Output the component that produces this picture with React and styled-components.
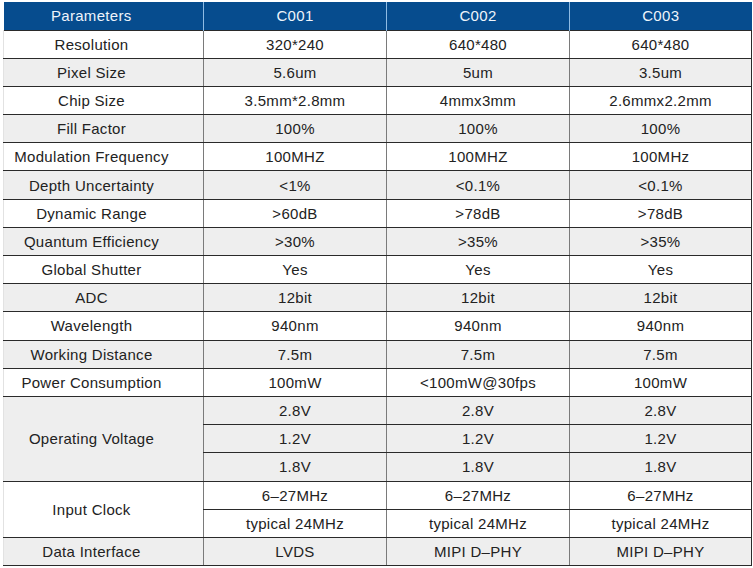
import React from "react";
import styled, { createGlobalStyle } from "styled-components";

const GlobalStyle = createGlobalStyle`
  html, body {
    margin: 0;
    padding: 0;
    background: #ffffff;
  }
  body {
    font-family: "Liberation Sans", Arial, sans-serif;
  }
`;

const models = ["C001", "C002", "C003"];

// each spec: label, then one array of values per sub-row
const specs = [
  { label: "Resolution", rows: [["320*240", "640*480", "640*480"]] },
  { label: "Pixel Size", rows: [["5.6um", "5um", "3.5um"]] },
  { label: "Chip Size", rows: [["3.5mm*2.8mm", "4mmx3mm", "2.6mmx2.2mm"]] },
  { label: "Fill Factor", rows: [["100%", "100%", "100%"]] },
  { label: "Modulation Frequency", rows: [["100MHZ", "100MHZ", "100MHz"]] },
  { label: "Depth Uncertainty", rows: [["<1%", "<0.1%", "<0.1%"]] },
  { label: "Dynamic Range", rows: [[">60dB", ">78dB", ">78dB"]] },
  { label: "Quantum Efficiency", rows: [[">30%", ">35%", ">35%"]] },
  { label: "Global Shutter", rows: [["Yes", "Yes", "Yes"]] },
  { label: "ADC", rows: [["12bit", "12bit", "12bit"]] },
  { label: "Wavelength", rows: [["940nm", "940nm", "940nm"]] },
  { label: "Working Distance", rows: [["7.5m", "7.5m", "7.5m"]] },
  { label: "Power Consumption", rows: [["100mW", "<100mW@30fps", "100mW"]] },
  {
    label: "Operating Voltage",
    rows: [
      ["2.8V", "2.8V", "2.8V"],
      ["1.2V", "1.2V", "1.2V"],
      ["1.8V", "1.8V", "1.8V"],
    ],
  },
  {
    label: "Input Clock",
    rows: [
      ["6–27MHz", "6–27MHz", "6–27MHz"],
      ["typical 24MHz", "typical 24MHz", "typical 24MHz"],
    ],
  },
  { label: "Data Interface", rows: [["LVDS", "MIPI D–PHY", "MIPI D–PHY"]] },
];

const SpecTable = () => {
  return (
    <Wrap>
      <Table>
        <colgroup>
          <col style={{ width: 200 }} />
          <col style={{ width: 183 }} />
          <col style={{ width: 183 }} />
          <col style={{ width: 182 }} />
        </colgroup>
        <thead>
          <HeadRow>
            <HeadCell $label>Parameters</HeadCell>
            {models.map((m) => (
              <HeadCell key={m}>{m}</HeadCell>
            ))}
          </HeadRow>
        </thead>
        <tbody>
          {specs.map((spec, i) =>
            spec.rows.map((values, j) => (
              <BodyRow key={spec.label + j} $shade={i % 2 === 1}>
                {j === 0 && (
                  <LabelCell rowSpan={spec.rows.length}>{spec.label}</LabelCell>
                )}
                {values.map((v, k) => (
                  <Cell key={k}>{v}</Cell>
                ))}
              </BodyRow>
            ))
          )}
        </tbody>
      </Table>
    </Wrap>
  );
};

export default function App() {
  return (
    <>
      <GlobalStyle />
      <SpecTable />
    </>
  );
}

const Wrap = styled.div`
  padding: 2px 0 0 3px;
`;

const Table = styled.table`
  border-collapse: collapse;
  table-layout: fixed;
  width: 748px;
  font-size: 15px;
  letter-spacing: 0.3px;
  color: #222222;
`;

const HeadRow = styled.tr`
  height: 28px;
  background: #064c8e;
`;

const HeadCell = styled.th`
  padding: 0 ${(p) => (p.$label ? "24px" : "0")} 0 0;
  font-weight: normal;
  color: #eef4fb;
  text-align: center;
  vertical-align: middle;
  border-left: 1px solid #8fbbe3;
  &:first-child {
    border-left: none;
  }
`;

const BodyRow = styled.tr`
  height: 28.2px;
  background: ${(p) => (p.$shade ? "#eeeeee" : "#ffffff")};
`;

const Cell = styled.td`
  padding: 0;
  text-align: center;
  vertical-align: middle;
  white-space: nowrap;
  border-top: 1px solid #2a2a2a;
  border-bottom: 1px solid #2a2a2a;
  border-left: 1px solid #7a7a7a;
  &:last-child {
    border-right: 1px solid #2a2a2a;
  }
`;

const LabelCell = styled(Cell)`
  padding-right: 24px;
  border-left: 1px solid #e2e2e2;
`;
